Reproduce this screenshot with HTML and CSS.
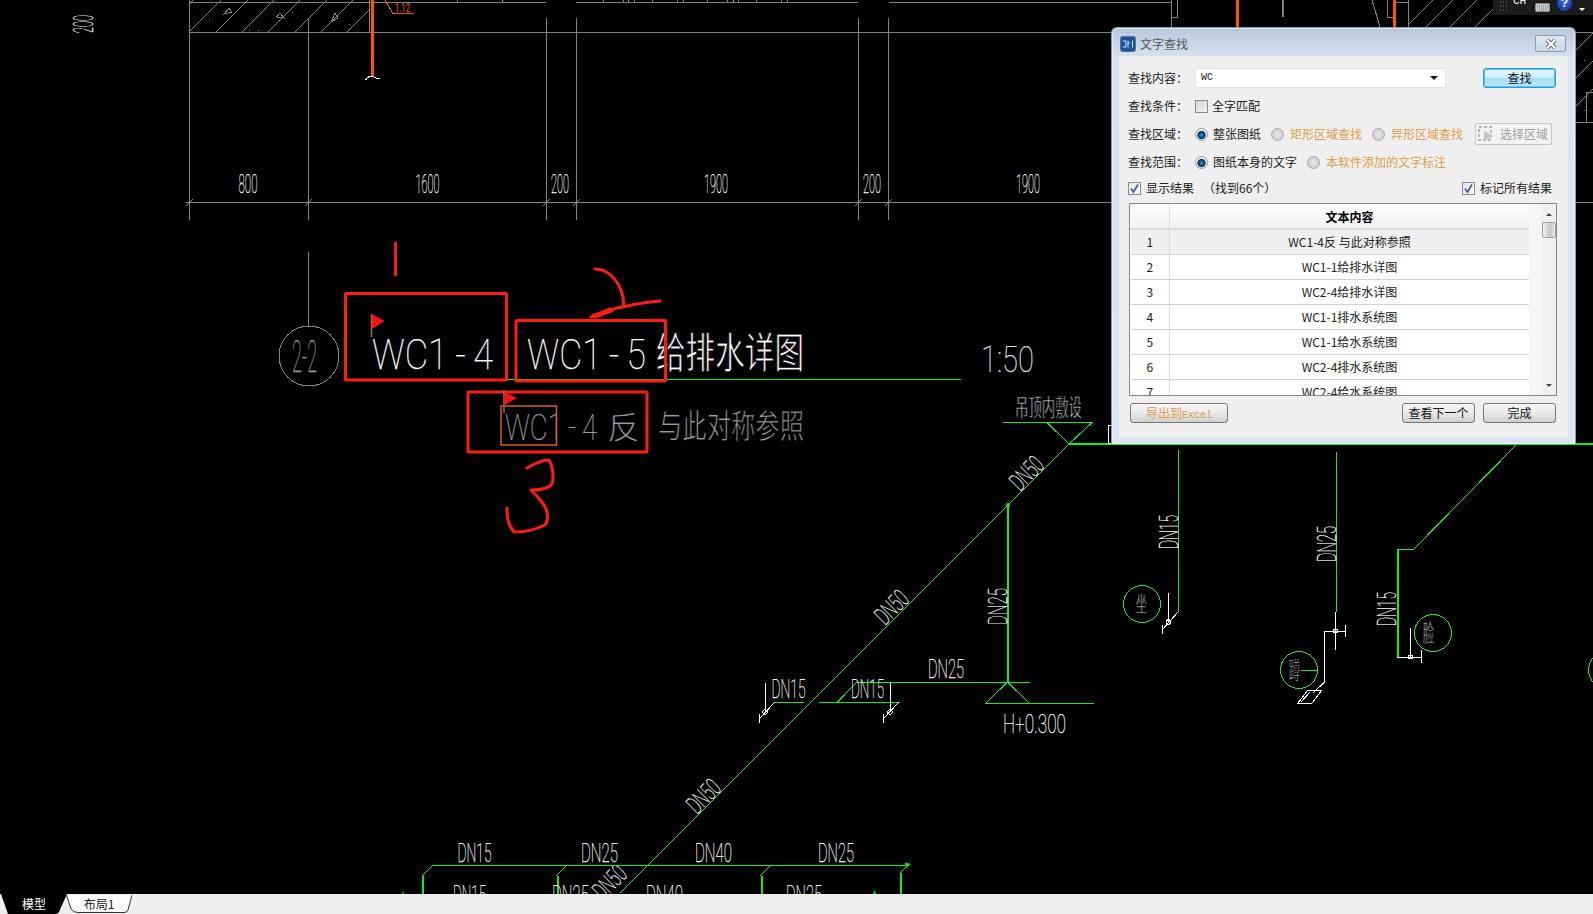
FILE: index.html
```html
<!DOCTYPE html>
<html lang="zh-CN">
<head>
  <meta charset="UTF-8" />
  <title>文字查找</title>
  <link rel="stylesheet" href="styles.css">
</head>
<body>
<div class="app">
  <div class="canvas">
    <svg class="drawing" width="1593" height="894" viewBox="0 0 1593 894">
      <!-- grey grid and dimensions -->
      <path class="ln-grey" d="M189 0V220M308.500 18V220M546.500 18V220M576.500 18V220M858.500 18V220M888.500 18V220M189 32.500H1593M186 202.500H1593M189 2.500H546M576 2.500H858M889 2.500H1171M369 0V32M457 0V2M603 0V2M652 0V2M677 0V2M683 0V2M707 0V2M756 0V2M781 0V2M787 0V2M623.500 0V2H634V0M727.500 0V2H738V0M1171.500 0V27M1171 17.500H1177.500V0M1387.500 0V17.500H1394M1394 2.500H1408M1408.500 0V27M1372 0L1380 27M1282 0L1283 17L1284 0"/>
      <path class="ln-grey" d="M186 206L193 199M305 206L312 199M543 206L550 199M573 206L580 199M855 206L862 199M885 206L892 199"/>
      <path class="ln-hatch" d="M189 32L221 0M216 32L248 0M242 32L274 0M268 32L300 0M295 32L327 0M321 32L353 0M347 32L369 10M189 5L193 0M224 14L229 8L232 12ZM277 17L280 13L284 18ZM331 22L335 13L338 18ZM1408 25L1433 0M1426 27L1453 0M1450 27L1477 0M1475 27L1493 9M1576 50L1593 33M1576 78L1593 61M1576 106L1593 89"/>
      <path class="ln-grey" d="M1586.500 92V122M1586 92.500H1593M1576 122.500H1593"/>
      <path class="ln-dots" d="M209 20h1M276 16h1M292 12h1M249 30h1M258 30h1M349 24h1M1470 20h1M1584 60h1M1584 110h1"/>

      <text class="cad" x="93" y="33" textLength="18" lengthAdjust="spacingAndGlyphs" transform="rotate(-90 93 33)" font-size="28">200</text>
      <text class="cad" x="238.500" y="193" textLength="19" lengthAdjust="spacingAndGlyphs" font-size="25">800</text>
      <text class="cad" x="415.500" y="193" textLength="24" lengthAdjust="spacingAndGlyphs" font-size="25">1600</text>
      <text class="cad" x="551" y="193" textLength="18" lengthAdjust="spacingAndGlyphs" font-size="25">200</text>
      <text class="cad" x="704" y="193" textLength="24" lengthAdjust="spacingAndGlyphs" font-size="25">1900</text>
      <text class="cad" x="863" y="193" textLength="18" lengthAdjust="spacingAndGlyphs" font-size="25">200</text>
      <text class="cad" x="1016" y="193" textLength="24" lengthAdjust="spacingAndGlyphs" font-size="25">1900</text>

      <!-- orange risers -->
      <path class="ln-riser" d="M372.500 0V76M1237.500 0V27M1394.500 0V27"/>
      <path class="ln-white" d="M365.500 80Q370 74 374 77T380 78"/>
      <path class="ln-orange" d="M385 0L393 13.500H414"/>
      <text class="cad cad-orange" x="395" y="12" textLength="15" lengthAdjust="spacingAndGlyphs" font-size="12">1.12</text>
      <path class="ln-green" d="M502 0V2M628.500 0V2M733.500 0V2"/>

      <!-- title block -->
      <path class="ln-grey" d="M308.500 252V326"/>
      <circle class="ln-grey" cx="309" cy="356" r="30"/>
      <text class="cad cad-grey" x="292" y="372" textLength="25" lengthAdjust="spacingAndGlyphs" font-size="45">2-2</text>
      <path class="ln-green" d="M506 379.500H961"/>
      <text class="cad" x="372" y="369" textLength="121" lengthAdjust="spacingAndGlyphs" font-size="43">WC1&#8201;-&#8201;4</text>
      <text class="cad" x="527" y="369" textLength="119" lengthAdjust="spacingAndGlyphs" font-size="43">WC1&#8201;-&#8201;5</text>
      <text class="cad-cjk" x="656" y="368" textLength="148" lengthAdjust="spacingAndGlyphs" font-size="42">给排水详图</text>
      <text class="cad cad-soft" x="981" y="372" textLength="53" lengthAdjust="spacingAndGlyphs" font-size="37">1:50</text>
      <text class="cad cad-grey" x="505" y="440" textLength="92" lengthAdjust="spacingAndGlyphs" font-size="37">WC1&#8201;-&#8201;4</text>
      <text class="cad-cjk cad-cjk-grey" x="607" y="439" textLength="33" lengthAdjust="spacingAndGlyphs" font-size="32">反</text>
      <text class="cad-cjk cad-cjk-grey" x="658" y="438" textLength="146" lengthAdjust="spacingAndGlyphs" font-size="33">与此对称参照</text>

      <!-- markup drawn over the drawing -->
      <rect class="mark" x="345.500" y="293.500" width="161" height="86.500" rx="1"/>
      <rect class="mark" x="516" y="320.500" width="149.500" height="60.500" rx="1"/>
      <rect class="mark" x="468" y="392" width="179" height="60" rx="1"/>
      <rect class="mark-hit" x="501" y="406" width="55.500" height="39"/>
      <path class="mark" d="M395.500 243V275"/>
      <path class="mark" d="M595 269C608 269 617 280 621 290C624 298 624 304 624 307M591 317C600 316 604 311 617 308C632 305 645 302 660 301"/>
      <path class="mark mark-heavy" d="M594 316C600 315 604 312 611 310"/>
      <path class="mark" d="M527 468C534 464 542 460 549 460C553 466 554 476 552 484C548 489 540 490 531 490C538 497 546 505 547 512C548 518 547 523 545 525C535 530 524 532 514 532C509 526 507 520 507 508"/>
      <path class="flag-pole" d="M371.500 314V337M504 390V413"/>
      <path class="flag" d="M372 314L384.500 321L372 329ZM504.500 392L517 398L504.500 405Z"/>

      <!-- ceiling mark and main riser -->
      <path class="ln-green" d="M1003 422.500H1092L1069 444L1047 422.500"/>
      <path class="ln-green" d="M1069 444L620 893"/>
      <path class="ln-green ln-main" d="M1069 444H1593"/>
      <path class="ln-white" d="M1111 425.500H1108.500V443H1111"/>
      <text class="cad-cjk" x="1015" y="416" textLength="67" lengthAdjust="spacingAndGlyphs" font-size="24">吊顶内敷设</text>
      <text class="cad" x="1020" y="492" textLength="36" lengthAdjust="spacingAndGlyphs" font-size="25" transform="rotate(-45 1020 492)">DN50</text>
      <text class="cad" x="885" y="626" textLength="36" lengthAdjust="spacingAndGlyphs" font-size="25" transform="rotate(-45 885 626)">DN50</text>
      <text class="cad" x="697" y="815" textLength="36" lengthAdjust="spacingAndGlyphs" font-size="25" transform="rotate(-45 697 815)">DN50</text>
      <text class="cad" x="603" y="901" textLength="36" lengthAdjust="spacingAndGlyphs" font-size="25" transform="rotate(-45 603 901)">DN50</text>

      <!-- DN25 riser down to H+0.300 -->
      <circle class="node" cx="1008" cy="505" r="2"/>
      <path class="ln-green ln-main" d="M1008 505V682"/>
      <path class="ln-green" d="M857 682.500H1030M1007.500 682L985.500 703.500H1094M1007.500 682L1029 703"/>
      <path class="ln-green" d="M857 682L837 702.500M819 702.500H899.500M775 702.500H804"/>
      <text class="cad" x="1007" y="625" textLength="37" lengthAdjust="spacingAndGlyphs" font-size="25" transform="rotate(-90 1007 625)">DN25</text>
      <text class="cad" x="928" y="678" textLength="36" lengthAdjust="spacingAndGlyphs" font-size="25">DN25</text>
      <text class="cad" x="851" y="698" textLength="33" lengthAdjust="spacingAndGlyphs" font-size="25">DN15</text>
      <text class="cad" x="771.500" y="698" textLength="34" lengthAdjust="spacingAndGlyphs" font-size="25">DN15</text>
      <text class="cad" x="1003" y="733" textLength="63" lengthAdjust="spacingAndGlyphs" font-size="26">H+0.300</text>
      <path class="ln-white" d="M890.500 683V712M899 702L883 719M883.500 714V723M765.500 683V712M775 702L759 719M759.500 714V723"/>
      <circle class="ln-white" cx="890" cy="712" r="2.200"/>
      <circle class="ln-white" cx="765" cy="712" r="2.200"/>

      <!-- bottom branch -->
      <path class="ln-green" d="M433 865.500H908M433 865L422 876M567 865L556 876M771 865L760 876M907 866L900 873"/>
      <path class="ln-green ln-main" d="M423 876V894M558 876V894M762 876V894M901 873V894"/>
      <path class="flag-green" d="M905 862.500L911 864L906 868ZM403 891L404 894H402ZM875 890L876 894H873Z"/>
      <text class="cad" x="457.500" y="862" textLength="34" lengthAdjust="spacingAndGlyphs" font-size="25">DN15</text>
      <text class="cad" x="581" y="862" textLength="37" lengthAdjust="spacingAndGlyphs" font-size="25">DN25</text>
      <text class="cad" x="695" y="862" textLength="37" lengthAdjust="spacingAndGlyphs" font-size="25">DN40</text>
      <text class="cad" x="818" y="862" textLength="36" lengthAdjust="spacingAndGlyphs" font-size="25">DN25</text>
      <text class="cad" x="453" y="904" textLength="33" lengthAdjust="spacingAndGlyphs" font-size="25">DN15</text>
      <text class="cad" x="552" y="904" textLength="37" lengthAdjust="spacingAndGlyphs" font-size="25">DN25</text>
      <text class="cad" x="646" y="904" textLength="37" lengthAdjust="spacingAndGlyphs" font-size="25">DN40</text>
      <text class="cad" x="786" y="904" textLength="36" lengthAdjust="spacingAndGlyphs" font-size="25">DN25</text>

      <!-- fixtures on the right -->
      <path class="ln-green" d="M1178.500 450V612M1336.500 452V612M1517 444L1413 550M1413 549.500H1397"/>
      <path class="ln-green ln-main" d="M1398 549V657"/>
      <path class="ln-white" d="M1178 612L1162 630M1168.500 593V622M1162.500 625V634"/>
      <circle class="ln-white" cx="1168.500" cy="622" r="2.200"/>
      <path class="ln-white" d="M1335.500 612V650M1324.500 631H1345M1345.500 625V637M1324.500 631V682L1313 693M1298 703L1308 690H1322L1312 703ZM1301 702L1310 692"/>
      <circle class="ln-white" cx="1335.500" cy="631" r="2"/>
      <path class="ln-white" d="M1397 657.500H1421M1421.500 650V663M1410.500 628V657"/>
      <circle class="ln-white" cx="1410.500" cy="657" r="2"/>
      <circle class="ln-green" cx="1142" cy="604" r="18.500"/>
      <circle class="ln-green" cx="1299" cy="670" r="18.500"/>
      <circle class="ln-green" cx="1433" cy="633" r="18.500"/>
      <circle class="ln-green" cx="1607" cy="670" r="18.500"/>
      <path class="ln-green" d="M1301 670.500H1318"/>
      <text class="cad" x="1178" y="549" textLength="34" lengthAdjust="spacingAndGlyphs" font-size="25" transform="rotate(-90 1178 549)">DN15</text>
      <text class="cad" x="1336" y="562" textLength="36" lengthAdjust="spacingAndGlyphs" font-size="25" transform="rotate(-90 1336 562)">DN25</text>
      <text class="cad" x="1396" y="626" textLength="34" lengthAdjust="spacingAndGlyphs" font-size="25" transform="rotate(-90 1396 626)">DN15</text>
      <text class="cad-cjk" x="1136" y="612" textLength="11" lengthAdjust="spacingAndGlyphs" font-size="22">坐</text>
      <text class="cad-cjk" x="1289" y="679" textLength="11" lengthAdjust="spacingAndGlyphs" font-size="24">蹲</text>
      <text class="cad-cjk" x="1423" y="642" textLength="11" lengthAdjust="spacingAndGlyphs" font-size="24">脸</text>
    </svg>

    <div class="tray">
      <svg class="tray-grip" width="10" height="12" viewBox="0 0 10 12"><path d="M1 1h1M4 1h1M7 1h1M1 5h1M4 5h1M7 5h1M1 9h1M4 9h1M7 9h1"/></svg>
      <span class="tray-lang">CH</span>
      <svg class="tray-kbd" width="15" height="9" viewBox="0 0 15 9"><rect x="0.500" y="0.500" width="14" height="8" rx="1"/><path d="M2 3h11M2 5h11M4 7h7"/></svg>
      <span class="tray-help">?</span>
      <span class="tray-arrow"></span>
    </div>

    <section class="dialog">
      <header class="titlebar">
        <svg class="app-icon" width="16" height="16" viewBox="0 0 16 16">
          <rect x="0.500" y="0.500" width="15" height="15" rx="2" fill="#1a56a0" stroke="#5d6f86"/>
          <path d="M3 5H6V11H3M8 4.500V11.500M8 8L10 6M12.500 4.500V11.500" fill="none" stroke="#cfe3fa"/>
        </svg>
        <span class="title">文字查找</span>
        <button class="close">
          <svg width="12" height="10" viewBox="0 0 12 10"><path d="M2 1L10 9M10 1L2 9" stroke="#656c78" stroke-width="4.200"/><path d="M2 1L10 9M10 1L2 9" stroke="#fff" stroke-width="2.200"/></svg>
        </button>
      </header>

      <div class="client">
        <div class="row">
          <label class="field-label">查找内容：</label>
          <div class="combo"><span class="combo-value">WC</span><span class="combo-arrow"></span></div>
          <button class="btn btn-primary">查找</button>
        </div>
        <div class="row">
          <label class="field-label">查找条件：</label>
          <span class="check"></span>
          <span class="opt opt-tight">全字匹配</span>
        </div>
        <div class="row">
          <label class="field-label">查找区域：</label>
          <span class="radio on"></span>
          <span class="opt">整张图纸</span>
          <span class="radio radio-next"></span>
          <span class="opt opt-warm">矩形区域查找</span>
          <span class="radio radio-next"></span>
          <span class="opt opt-warm">异形区域查找</span>
          <button class="btn-area">
            <svg width="17" height="16" viewBox="0 0 17 16"><rect x="1" y="1" width="12" height="13" fill="none" stroke="#b5b5b5" stroke-width="2" stroke-dasharray="3 2"/><path d="M6 5L15 10L6 15Z" fill="#c4c4c4"/></svg>
            选择区域
          </button>
        </div>
        <div class="row">
          <label class="field-label">查找范围：</label>
          <span class="radio on"></span>
          <span class="opt">图纸本身的文字</span>
          <span class="radio radio-next"></span>
          <span class="opt opt-warm">本软件添加的文字标注</span>
        </div>
        <div class="row row-result">
          <span class="check checked"><svg width="11" height="11" viewBox="0 0 11 11"><path d="M2 5.500L4.500 9L9 1.500" fill="none" stroke="#4a5bb0" stroke-width="1.800"/></svg></span>
          <span class="opt">显示结果</span>
          <span class="found">（找到66个）</span>
          <span class="check checked check-right"><svg width="11" height="11" viewBox="0 0 11 11"><path d="M2 5.500L4.500 9L9 1.500" fill="none" stroke="#4a5bb0" stroke-width="1.800"/></svg></span>
          <span class="opt">标记所有结果</span>
        </div>

        <div class="results">
          <div class="results-body">
            <table class="grid">
              <thead>
                <tr><th class="col-no"></th><th>文本内容</th></tr>
              </thead>
              <tbody>
                <tr class="current"><td class="col-no">1</td><td>WC1-4反 与此对称参照</td></tr>
                <tr><td class="col-no">2</td><td>WC1-1给排水详图</td></tr>
                <tr><td class="col-no">3</td><td>WC2-4给排水详图</td></tr>
                <tr><td class="col-no">4</td><td>WC1-1排水系统图</td></tr>
                <tr><td class="col-no">5</td><td>WC1-1给水系统图</td></tr>
                <tr><td class="col-no">6</td><td>WC2-4排水系统图</td></tr>
                <tr><td class="col-no">7</td><td>WC2-4给水系统图</td></tr>
              </tbody>
            </table>
          </div>
          <div class="scrollbar">
            <span class="arrow-up"></span>
            <span class="thumb"></span>
            <span class="arrow-down"></span>
          </div>
        </div>

        <div class="row row-actions">
          <button class="btn btn-export">导出到<span class="mono">Excel</span></button>
          <button class="btn btn-next">查看下一个</button>
          <button class="btn btn-done">完成</button>
        </div>
      </div>
    </section>
  </div>

  <footer class="tabs">
    <div class="tab tab-active">
      <svg class="tab-shape" width="67" height="20" viewBox="0 0 67 20"><path d="M1 0H67L59 18Q58 20 55 20H8Z" fill="#000"/></svg>
      <span>模型</span>
    </div>
    <div class="tab tab-plain">
      <svg class="tab-shape" width="66" height="20" viewBox="0 0 66 20"><path d="M0.500 1L5 15Q7 18.500 12 18.500H58Q61 18.500 62 16L66 1" fill="#fff" stroke="#333"/></svg>
      <span>布局1</span>
    </div>
  </footer>
</div>
</body>
</html>
```

FILE: styles.css
```css
* {
  box-sizing: border-box;
}
body {
  margin: 0;
  background: #000;
  font-family: "Noto Sans CJK SC", "Noto Sans", sans-serif;
  font-size: 12px;
  color: #222;
}
.app {
  width: 1593px;
  height: 914px;
  display: flex;
  flex-direction: column;
  overflow: hidden;
}
.canvas {
  position: relative;
  flex: 1;
  background: #000;
  overflow: hidden;
}
.drawing {
  display: block;
}

/* cad linework */
.ln-grey, .ln-hatch, .ln-green, .ln-white, .ln-orange, .ln-dots, .ln-riser, .mark, .mark-hit, .flag-pole {
  fill: none;
}
.ln-grey, .ln-hatch, .ln-green, .ln-white, .ln-orange, .ln-dots {
  shape-rendering: crispEdges;
}
.ln-grey {
  stroke: #808080;
  stroke-width: 1;
}
.ln-hatch {
  stroke: #808080;
  stroke-width: 1;
}
.ln-dots {
  stroke: #808080;
  stroke-width: 1;
}
.ln-green {
  stroke: #12ee12;
  stroke-width: 1;
}
.ln-main {
  stroke-width: 2;
}
.ln-white {
  stroke: #fff;
  stroke-width: 1;
}
.ln-orange {
  stroke: #f05a00;
  stroke-width: 1;
}
.ln-riser {
  stroke: #f05a00;
  stroke-width: 3.200;
}
.node, .flag-green {
  fill: #12ee12;
}
.mark {
  stroke: #ff1d10;
  stroke-width: 3;
  stroke-linecap: round;
  stroke-linejoin: round;
}
.mark-heavy {
  stroke-width: 5;
}
.mark-hit {
  stroke: #e0661c;
  stroke-width: 1.400;
}
.flag {
  fill: #ff1010;
}
.flag-pole {
  stroke: #8f6a35;
  stroke-width: 1.600;
}

/* cad text */
.cad {
  font-family: Roboto, "Liberation Sans", sans-serif;
  font-weight: 100;
  fill: #fff;
  stroke: #fff;
  stroke-width: 0.250;
}
.cad-grey {
  fill: #9a9a9a;
  stroke: #9a9a9a;
}
.cad-soft {
  fill: #ddd;
  stroke: #ddd;
}
.cad-orange {
  fill: #f05a00;
  stroke: none;
  font-weight: 400;
}
.cad-cjk {
  font-family: "Noto Sans CJK SC", sans-serif;
  font-weight: 400;
  fill: #fff;
  stroke: #000;
  stroke-width: 0.900;
  paint-order: fill stroke;
}
.cad-cjk-grey {
  fill: #9a9a9a;
}

/* top right language bar */
.tray {
  position: absolute;
  top: 0;
  left: 1493px;
  width: 100px;
  height: 15px;
  background: #1c1c1c;
  display: flex;
  align-items: flex-start;
  color: #fff;
}
.tray-grip {
  margin: 1px 0 0 6px;
  stroke: #777;
  fill: none;
}
.tray-lang {
  margin: -6px 0 0 4px;
  width: 14px;
  font-family: "Liberation Mono", monospace;
  font-size: 11px;
  line-height: 15px;
}
.tray-kbd {
  margin: 3px 0 0 8px;
}
.tray-kbd rect {
  fill: #c8ccd2;
  stroke: #888;
}
.tray-kbd path {
  stroke: #777;
  stroke-dasharray: 1 1;
}
.tray-help {
  margin: -4px 0 0 7px;
  width: 15px;
  height: 15px;
  border-radius: 50%;
  background: radial-gradient(circle at 50% 35%, #3a6fe0, #0a2a9a);
  color: #fff;
  font-family: "Liberation Sans", sans-serif;
  font-weight: bold;
  font-size: 12px;
  line-height: 15px;
  text-align: center;
}
.tray-arrow {
  margin: 8px 0 0 7px;
  border-left: 3px solid transparent;
  border-right: 3px solid transparent;
  border-top: 3px solid #fff;
}

/* dialog */
.dialog {
  position: absolute;
  left: 1111px;
  top: 27px;
  width: 465px;
  height: 417px;
  padding: 0 7px 7px;
  display: flex;
  flex-direction: column;
  border: 1px solid #8b97a3;
  border-bottom: 0;
  border-radius: 6px 6px 0 0;
  background: linear-gradient(#b9c9da 0, #d5e2f0 30px, #d9e5f2 100%);
  box-shadow: inset 0 0 0 1px rgba(255, 255, 255, 0.5);
}
.titlebar {
  height: 28px;
  flex: none;
  display: flex;
  align-items: center;
  padding: 3px 2px 0 1px;
}
.app-icon {
  flex: none;
}
.title {
  margin-left: 4px;
  flex: 1;
  color: #555;
}
.close {
  width: 31px;
  height: 17px;
  padding: 0;
  display: flex;
  align-items: center;
  justify-content: center;
  border: 1px solid #8c9db5;
  border-radius: 2px;
  background: linear-gradient(#dfe7f1, #c9d6e6);
}
.client {
  flex: 1;
  background: #efefef;
  padding: 12px 11px 0 9px;
  display: flex;
  flex-direction: column;
  gap: 8px;
}
.row {
  height: 20px;
  flex: none;
  display: flex;
  align-items: center;
  line-height: 20px;
  white-space: nowrap;
}
.field-label {
  width: 67px;
  flex: none;
}
.combo {
  width: 251px;
  height: 20px;
  display: flex;
  align-items: center;
  justify-content: space-between;
  padding: 0 7px 0 5px;
  background: #fff;
  border: 1px solid #e4e4e4;
  border-radius: 2px;
}
.combo-value {
  font-family: "Liberation Mono", monospace;
  font-size: 10px;
}
.combo-arrow {
  border-left: 4px solid transparent;
  border-right: 4px solid transparent;
  border-top: 4px solid #111;
}
.btn {
  height: 20px;
  padding: 0;
  font: inherit;
  line-height: 18px;
  color: #111;
  border: 1px solid #777;
  border-radius: 3px;
  background: linear-gradient(#f6f6f6 0, #ececec 45%, #cfcfcf 100%);
}
.btn-primary {
  width: 73px;
  margin-left: 37px;
  border: 1px solid #1f9fd8;
  background: linear-gradient(#e4f6ff 0, #cdeeff 45%, #a5dcf8 55%, #bfe6fa 100%);
  box-shadow: inset 0 0 0 1px #5cc3ee;
}
.check {
  width: 13px;
  height: 13px;
  flex: none;
  display: flex;
  align-items: center;
  justify-content: center;
  border: 1px solid #8a8a8a;
  background: linear-gradient(135deg, #d4d4d4, #f4f4f4);
}
.checked {
  background: linear-gradient(135deg, #e8e8e8, #fafafa);
}
.check-right {
  margin-left: 7px;
}
.radio {
  width: 13px;
  height: 13px;
  flex: none;
  border-radius: 50%;
  border: 1px solid #a5a5a5;
  background: radial-gradient(circle, #e8e8e8 0, #d0d0d0 60%, #f2f2f2 100%);
}
.radio.on {
  border-color: #8f9aa6;
  background: radial-gradient(circle at 50% 55%, #25aef0 0, #0c6fb0 18%, #0a3558 38%, #0a3558 45%, #e8edf1 56%, #f5f5f5 100%);
}
.radio-next {
  margin-left: 10px;
}
.opt {
  margin-left: 5px;
}
.opt-tight {
  margin-left: 4px;
}
.opt-warm {
  margin-left: 6px;
  color: #d9a047;
}
.btn-area {
  width: 77px;
  height: 22px;
  margin-left: 12px;
  padding: 0 0 0 2px;
  display: flex;
  align-items: center;
  gap: 5px;
  font: inherit;
  line-height: 20px;
  color: #a0a0a0;
  border: 1px solid #c6c6c6;
  border-radius: 2px;
  background: #f2f2f2;
  white-space: nowrap;
}
.row-result {
  margin-top: -2px;
}
.found {
  margin-left: 9px;
  width: 252px;
}

/* results table */
.results {
  height: 193px;
  width: 428px;
  flex: none;
  margin: -3px 0 0 1px;
  display: flex;
  background: #fff;
  border: 1px solid #7f8790;
  overflow: hidden;
}
.results-body {
  width: 410px;
  flex: none;
  overflow: hidden;
  background: linear-gradient(90deg, #fff 399px, #f6f6f6 399px);
}
.grid {
  width: 399px;
  table-layout: fixed;
  border-collapse: collapse;
}
.grid th {
  height: 25px;
  padding: 0;
  font-size: 12px;
  font-weight: bold;
  color: #000;
  background: linear-gradient(#fff, #f0f0f0);
  border-bottom: 2px solid #dcdcdc;
  border-left: 1px solid #fafafa;
}
.grid td {
  height: 25px;
  padding: 0;
  text-align: center;
  background: #fff;
  border-bottom: 1px solid #d2d2d2;
  color: #222;
}
.grid .col-no {
  width: 39px;
  border-right: 1px solid #dcdcdc;
}
.grid .current td {
  background: #efefef;
}
.scrollbar {
  flex: 1;
  position: relative;
  background: #f0f0f0;
  border-left: 1px solid #f8f8f8;
}
.arrow-up, .arrow-down {
  position: absolute;
  left: 5px;
  border-left: 3px solid transparent;
  border-right: 3px solid transparent;
}
.arrow-up {
  top: 9px;
  border-bottom: 3px solid #444;
}
.arrow-down {
  bottom: 8px;
  border-top: 3px solid #444;
}
.thumb {
  position: absolute;
  left: 1px;
  top: 18px;
  width: 14px;
  height: 16px;
  border: 1px solid #9aa2ab;
  border-radius: 2px;
  background: linear-gradient(90deg, #f4f4f4, #c4c4c4 60%, #eee);
}

/* bottom buttons */
.row-actions {
  margin-top: -1px;
}
.btn-export {
  width: 98px;
  margin-left: 2px;
  color: #d9a047;
}
.mono {
  font-family: "Liberation Mono", monospace;
  font-size: 10px;
}
.btn-next {
  width: 73px;
  margin-left: 174px;
}
.btn-done {
  width: 73px;
  margin-left: 8px;
}

/* layout tabs */
.tabs {
  height: 20px;
  flex: none;
  display: flex;
  background: #efefef;
}
.tab {
  position: relative;
  display: flex;
  align-items: center;
  justify-content: center;
  line-height: 18px;
}
.tab span {
  position: relative;
}
.tab-shape {
  position: absolute;
  top: 0;
  left: 0;
}
.tab-active {
  width: 66px;
  padding-left: 2px;
  color: #fff;
}
.tab-plain {
  width: 66px;
  color: #222;
}
```
